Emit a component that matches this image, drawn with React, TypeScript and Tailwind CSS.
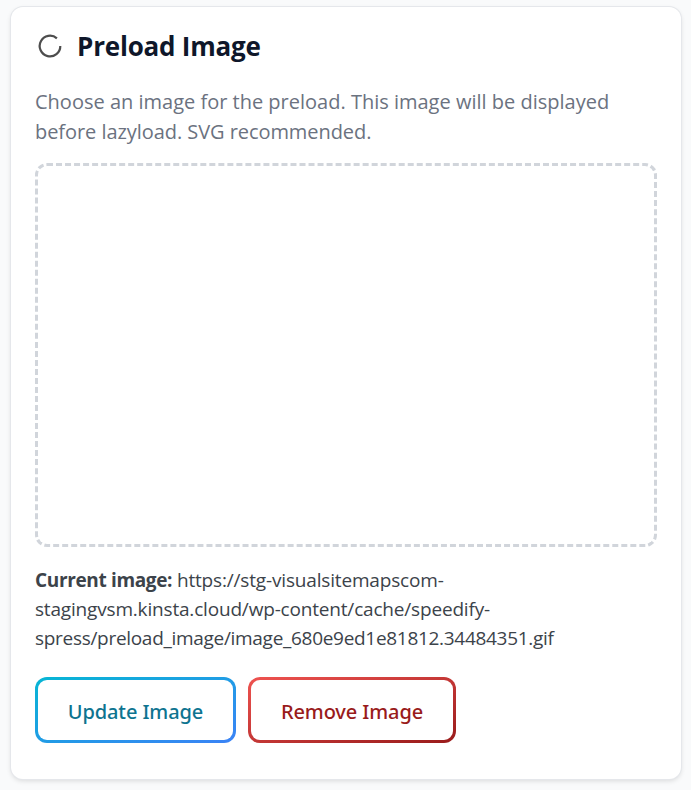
const GradientButton = ({ label, frame, text, size }: { label: string; frame: string; text: string; size: string }) => (
  <button type="button" className={`h-[66px] rounded-xl p-[3px] ${frame} ${size}`}>
    <span className={`flex h-full items-center justify-center rounded-[9px] bg-white pt-1 font-['Noto_Sans',sans-serif] text-[20px] font-medium tracking-[-0.1px] whitespace-nowrap ${text}`}>
      {label}
    </span>
  </button>
);

const App = () => {
  return (
    <main className="min-h-screen bg-[#f9fafb] pt-[7px] pl-[11px] font-['Open_Sans',sans-serif]">
      <section className="h-[772px] w-[670px] rounded-xl bg-white px-6 pt-[21px] shadow-[0_0_0_1px_#e5e7eb,0_2px_5px_rgba(0,0,0,0.13)]">
        {/* Heading */}
        <div className="flex h-9 items-center gap-3">
          <svg className="h-[30px] w-[30px]" viewBox="0 0 30 30" fill="none" stroke="#4d4d4d" strokeWidth="2.2">
            <path d="M21.9 7.4A10.3 10.3 0 1 0 25.3 14.9" />
          </svg>
          <h2 className="text-[26px] font-bold tracking-[-0.2px] text-[#0f172a]">Preload Image</h2>
        </div>

        <p className="mt-[23px] text-[20px] leading-[30px] whitespace-nowrap text-[#6b7280]">
          <span className="block">Choose an image for the preload. This image will be displayed</span>
          <span className="block tracking-[-0.06px]">before lazyload. SVG recommended.</span>
        </p>

        {/* Preview area */}
        <div className="mt-4 h-[384px] w-[622px] rounded-xl border-3 border-dashed border-[#d1d5db]"></div>

        <p className="mt-[19px] text-[19px] leading-[29px] whitespace-nowrap text-[#3c434a]">
          <span className="block tracking-[-0.17px]">
            <strong className="font-bold tracking-[-0.35px]">Current image:</strong> https://stg-visualsitemapscom-
          </span>
          <span className="block tracking-[-0.18px]">stagingvsm.kinsta.cloud/wp-content/cache/speedify-</span>
          <span className="block tracking-[-0.3px]">spress/preload_image/image_680e9ed1e81812.34484351.gif</span>
        </p>

        <div className="mt-6 flex gap-3">
          <GradientButton label="Update Image" frame="bg-[linear-gradient(to_bottom_right,#06b6d4,#3b82f6)]" text="text-[#0e7490]" size="w-[201px]" />
          <GradientButton label="Remove Image" frame="bg-[linear-gradient(to_bottom_right,#ef5350,#991b1b)]" text="text-[#991b1b]" size="w-[208px]" />
        </div>
      </section>
    </main>
  );
};

export default App;
